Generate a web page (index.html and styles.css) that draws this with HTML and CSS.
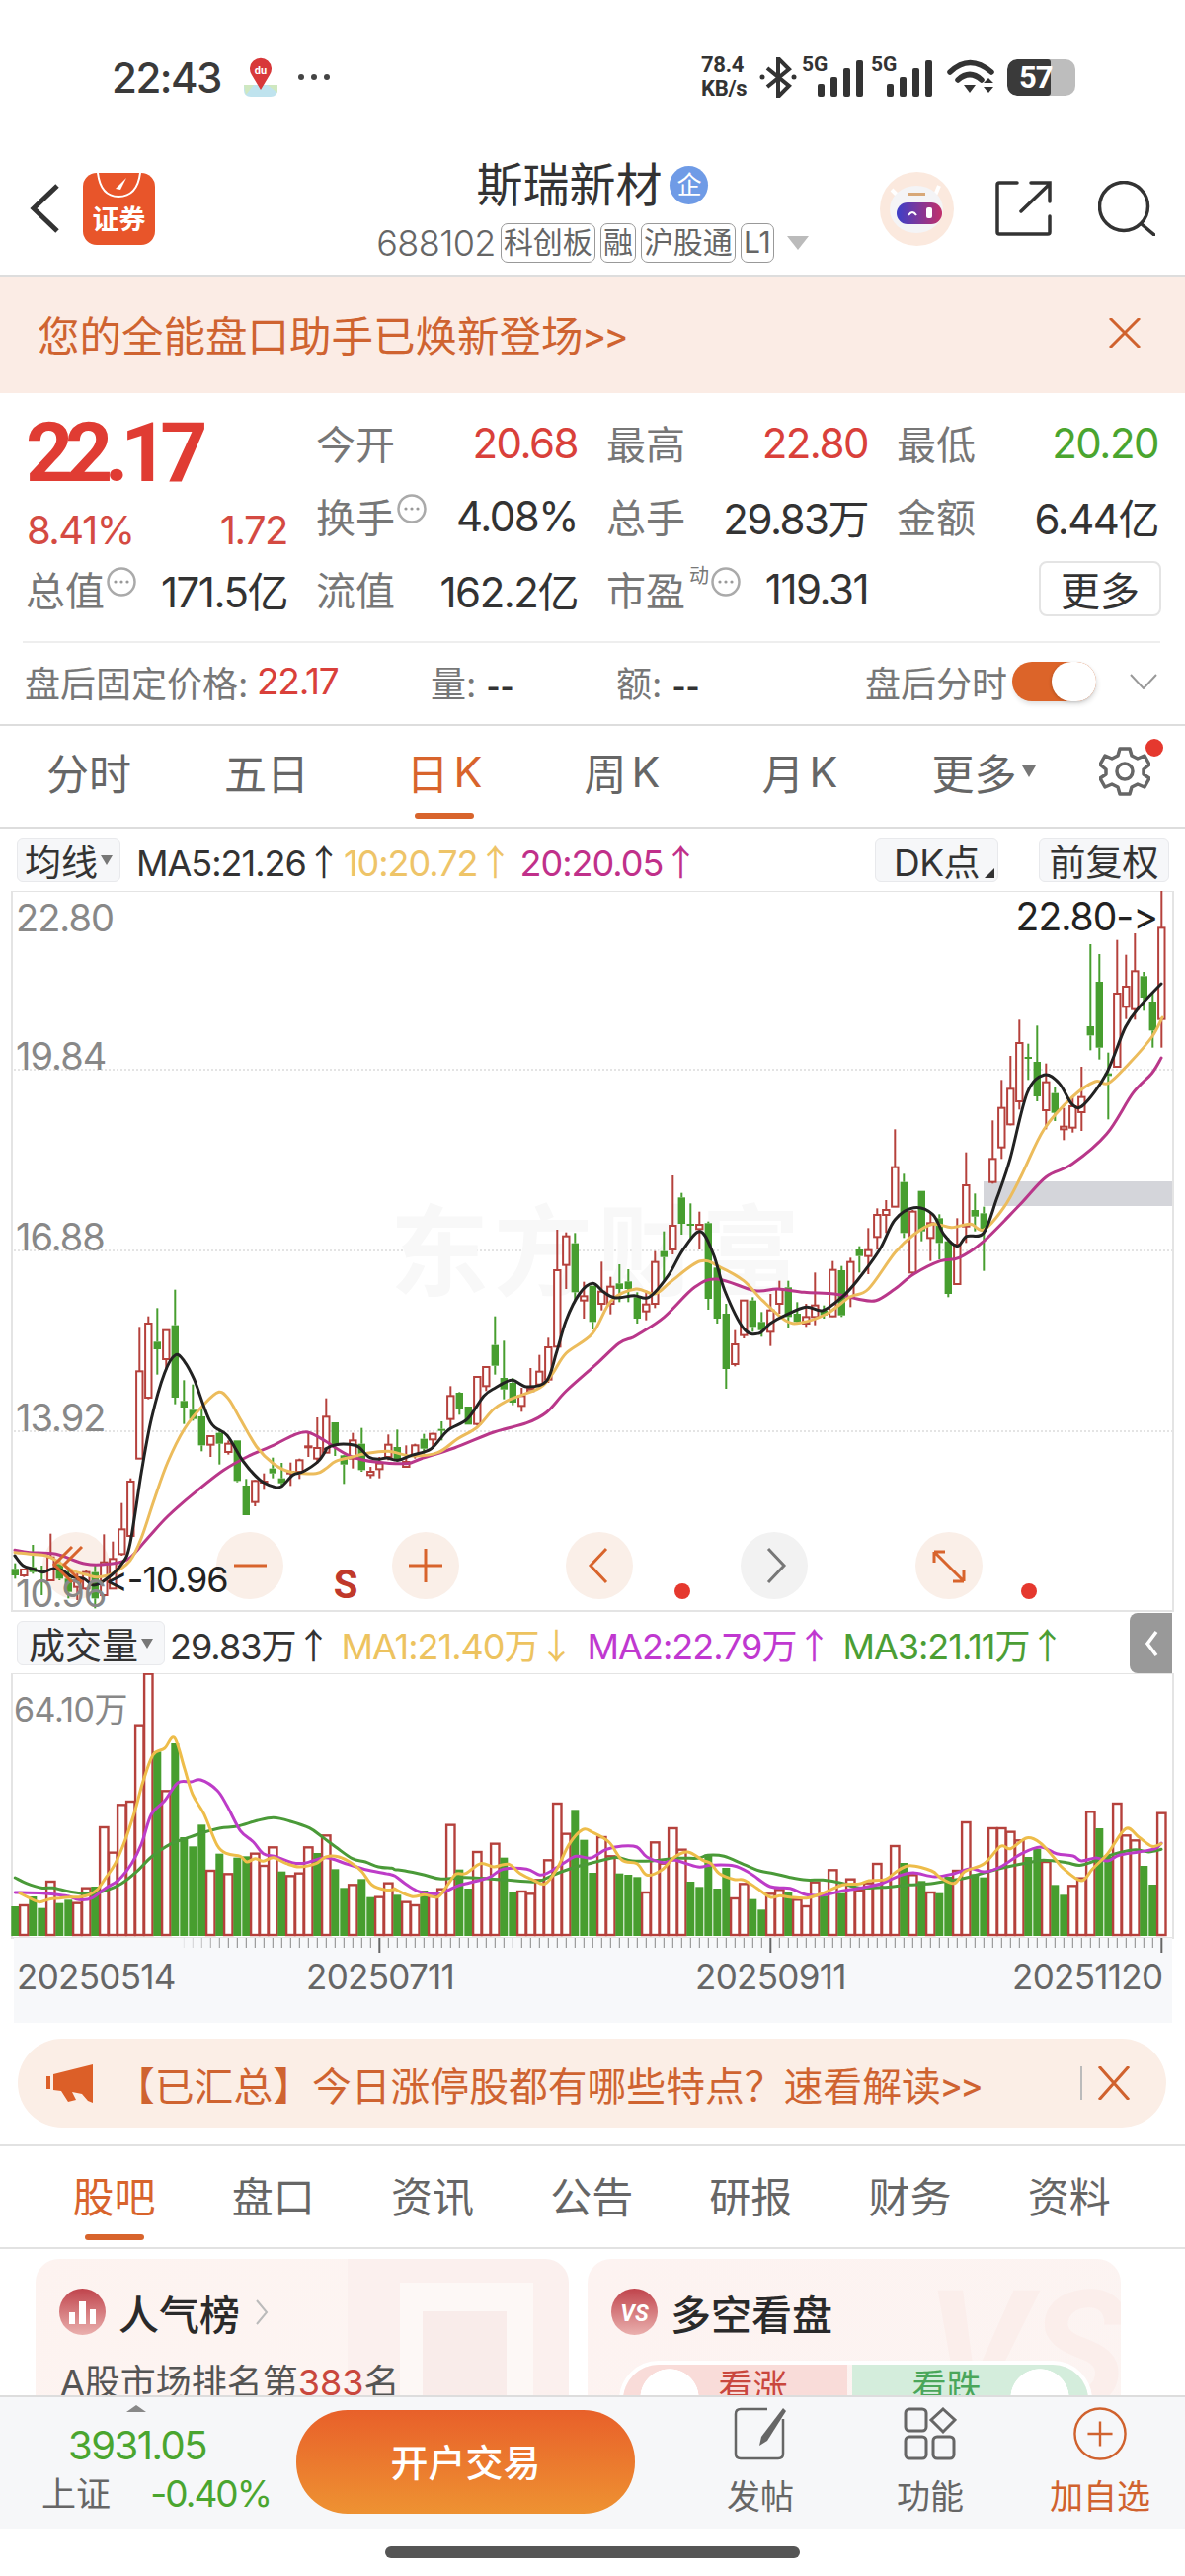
FILE: index.html
```html
<!DOCTYPE html>
<html lang="zh">
<head>
<meta charset="utf-8">
<title>斯瑞新材</title>
<link rel="stylesheet" href="styles.css">
</head>
<body>
<div class="page">
  <div class="content">
    <div class="status">
      <span class="clock">22:43</span>
      <svg class="map-ico" viewBox="0 0 38 40"><rect width="38" height="40" rx="8" fill="#fff"/><path d="M2 28 H36 V33 Q36 40 29 40 H9 Q2 40 2 33 Z" fill="#bfe3ee"/><path d="M2 28 L12 28 L4 38 Z M26 28 H36 V36 Z" fill="#cfe8c0"/><path d="M19 33 L10 18 A11 11 0 1 1 28 18 Z" fill="#d8383a"/><text class="du" x="19" y="17" text-anchor="middle">du</text></svg>
      <svg class="dots-ico" viewBox="0 0 32 8"><circle cx="3" cy="4" r="3"/><circle cx="16" cy="4" r="3"/><circle cx="29" cy="4" r="3"/></svg>
      <div class="sys">
        <div class="net"><b>78.4</b><b>KB/s</b></div>
        <svg class="bt" viewBox="0 0 38 41"><path d="M8 11 L30 29 L19 40 V1 L30 12 L8 30" fill="none" stroke="#333" stroke-width="4"/><circle cx="3" cy="20" r="2.5" fill="#333"/><circle cx="35" cy="20" r="2.5" fill="#333"/></svg>
        <svg class="sig" viewBox="0 -6 63 46"><text class="g5" x="0" y="14">5G</text><rect x="16" y="27" width="7" height="13" rx="2"/><rect x="29" y="20" width="7" height="20" rx="2"/><rect x="42" y="11" width="7" height="29" rx="2"/><rect x="55" y="3" width="7" height="37" rx="2"/></svg>
        <svg class="sig" viewBox="0 -6 63 46"><text class="g5" x="0" y="14">5G</text><rect x="16" y="27" width="7" height="13" rx="2"/><rect x="29" y="20" width="7" height="20" rx="2"/><rect x="42" y="11" width="7" height="29" rx="2"/><rect x="55" y="3" width="7" height="37" rx="2"/></svg>
        <svg class="wifi" viewBox="0 0 49 36"><path d="M3 13 Q23 -6 45 13" fill="none" stroke="#333" stroke-width="5.5" stroke-linecap="round"/><path d="M11 21 Q23 10 35 21" fill="none" stroke="#333" stroke-width="5.5" stroke-linecap="round"/><path d="M17 26 H29 L23 34 Z M37 24 L42 19 L47 24 Z M37 28 H47 L42 34 Z" fill="#333"/></svg>
        <div class="batt"><div class="batt-fill">57</div></div>
      </div>
    </div>

    <header class="head">
      <div class="head-l">
        <svg class="back" viewBox="0 0 31 52"><path d="M28 3 L4 26 L28 49" fill="none" stroke="#333" stroke-width="5"/></svg>
        <div class="logo"><svg class="logo-arc" viewBox="0 0 73 30"><path d="M15 0 Q18 24 36 24 Q55 24 58 0" fill="none" stroke="#fff" stroke-width="2"/><path d="M33 16 L44 5 L38 17 Z" fill="#fff"/></svg><span>证券</span></div>
      </div>
      <div class="head-c">
        <div class="title"><span>斯瑞新材</span><i class="qi">企</i></div>
        <div class="sub"><span class="code">688102</span><span class="tag">科创板</span><span class="tag">融</span><span class="tag">沪股通</span><span class="tag">L1</span><i class="tri"></i></div>
      </div>
      <div class="head-r">
        <svg class="robot" viewBox="0 0 75 75"><defs><linearGradient id="rb" x1="0" x2="1"><stop offset="0" stop-color="#3c3fc8"/><stop offset="1" stop-color="#c2306a"/></linearGradient></defs><circle cx="37.5" cy="37.5" r="37.5" fill="#fbe9de"/><path d="M12 18 L20 26 M60 14 L55 26" stroke="#fff" stroke-width="4"/><ellipse cx="37" cy="38" rx="27" ry="24" fill="#f4f4f6"/><rect x="29" y="21" width="17" height="3" fill="#d8a878"/><rect x="17" y="31" width="46" height="22" rx="11" fill="url(#rb)"/><path d="M29 44 Q33 38 37 44" fill="none" stroke="#fff" stroke-width="2"/><rect x="47" y="36" width="6" height="11" rx="2" fill="#fff"/></svg>
        <svg class="ext" viewBox="0 0 57 56"><path d="M22 2 H4 Q2 2 2 4 V52 Q2 54 4 54 H53 Q55 54 55 52 V36 M26 31 L55 3 M36 2 H55 V21" fill="none" stroke="#333" stroke-width="3.5" stroke-linecap="round"/></svg>
        <svg class="search" viewBox="0 0 58 56"><circle cx="26" cy="26" r="24.5" fill="none" stroke="#333" stroke-width="3.5"/><path d="M44 44 L57 55" stroke="#333" stroke-width="3.5" stroke-linecap="round"/></svg>
      </div>
    </header>

    <div class="notice">
      <span>您的全能盘口助手已焕新登场&gt;&gt;</span>
      <svg class="x-ico" viewBox="0 0 32 30"><path d="M1 0 L31 30 M31 0 L1 30" stroke="#d0622e" stroke-width="3"/></svg>
    </div>

    <section class="quote">
      <div class="price">
        <div class="big">22.17</div>
        <div class="chg"><span>8.41%</span><span>1.72</span></div>
      </div>
      <div class="cell"><span class="lab">今开</span><span class="red">20.68</span></div>
      <div class="cell"><span class="lab">最高</span><span class="red">22.80</span></div>
      <div class="cell"><span class="lab">最低</span><span class="grn">20.20</span></div>
      <div class="cell"><span class="lab">换手<svg class="hint" viewBox="0 0 30 30"><use href="#hint"/></svg></span><span class="dark">4.08%</span></div>
      <div class="cell"><span class="lab">总手</span><span class="dark">29.83万</span></div>
      <div class="cell"><span class="lab">金额</span><span class="dark">6.44亿</span></div>
      <div class="cell"><span class="lab">总值<svg class="hint" viewBox="0 0 30 30"><use href="#hint"/></svg></span><span class="dark">171.5亿</span></div>
      <div class="cell"><span class="lab">流值</span><span class="dark">162.2亿</span></div>
      <div class="cell"><span class="lab">市盈<sup class="dyn">动</sup><svg class="hint" viewBox="0 0 30 30"><use href="#hint"/></svg></span><span class="dark">119.31</span></div>
      <div class="cell more-cell"><button class="more">更多</button></div>
    </section>
    <svg class="defs"><defs><g id="hint"><circle cx="15" cy="15" r="13.5" fill="none" stroke="#aaa" stroke-width="2.5"/><circle cx="9" cy="15" r="1.6" fill="#999"/><circle cx="15" cy="15" r="1.6" fill="#999"/><circle cx="21" cy="15" r="1.6" fill="#999"/></g></defs></svg>

    <div class="after">
      <span class="al">盘后固定价格:</span>
      <span class="red al-v">22.17</span>
      <span class="al">量: <b>--</b></span>
      <span class="al">额: <b>--</b></span>
      <span class="al">盘后分时</span>
      <span class="toggle"><i></i></span>
      <svg class="chev" viewBox="0 0 28 16"><path d="M1 1 L14 15 L27 1" fill="none" stroke="#999" stroke-width="2"/></svg>
    </div>

    <nav class="ktabs">
      <span class="ktab">分时</span>
      <span class="ktab">五日</span>
      <span class="ktab on">日<span class="k">K</span></span>
      <span class="ktab">周<span class="k">K</span></span>
      <span class="ktab">月<span class="k">K</span></span>
      <span class="ktab ktab-more">更多<i class="caret"></i></span>
      <span class="gear-w">
        <svg class="gear" viewBox="0 0 52 52"><path d="M21 3 H31 L33 10 L39 13 L46 10 L51 19 L45 24 V29 L51 33 L46 42 L39 39 L33 42 L31 49 H21 L19 42 L13 39 L6 42 L1 33 L7 29 V24 L1 19 L6 10 L13 13 L19 10 Z" fill="none" stroke="#666" stroke-width="3.5" stroke-linejoin="round"/><circle cx="26" cy="26" r="8" fill="none" stroke="#666" stroke-width="3.5"/></svg>
        <i class="gear-dot"></i>
      </span>
    </nav>

    <div class="marow">
      <span class="pick pick-ma">均线<i class="caret sm"></i></span>
      <span class="mav dark">MA5:21.26<span class="ar">↑</span></span>
      <span class="mav c-y">10:20.72<span class="ar">↑</span></span>
      <span class="mav c-m">20:20.05<span class="ar">↑</span></span>
      <span class="pick pick-dk">DK点<i class="corner"></i></span>
      <span class="pick pick-fq">前复权</span>
    </div>

    <svg class="pchart" viewBox="0 902 1200 741">
      <rect class="frame" x="12" y="902" width="1176" height="729"/>
      <path class="grid" d="M14 1083 H1187 M14 1266 H1187 M14 1449 H1187"/>
      <text class="wm" x="395" y="1304">东方财富</text>
      <rect class="band" x="996" y="1196" width="191" height="25"/>
      <circle class="fab" cx="77" cy="1585" r="34"/>
      <circle class="fab" cx="253" cy="1585" r="34"/>
      <circle class="fab" cx="431" cy="1585" r="34"/>
      <circle class="fab" cx="607" cy="1585" r="34"/>
      <circle class="fab gr" cx="784" cy="1585" r="34"/>
      <circle class="fab" cx="961" cy="1585" r="34"/>
      <g id="candles"></g>
      <g id="mas"></g>
      <text class="axis" x="16" y="943">22.80</text>
      <text class="axis" x="16" y="1083">19.84</text>
      <text class="axis" x="16" y="1266">16.88</text>
      <text class="axis" x="16" y="1449">13.92</text>
      <text class="axis" x="16" y="1627">10.96</text>
      <text class="mark" x="1172" y="942" text-anchor="end">22.80-&gt;</text>
      <text class="mark sm" x="106" y="1612">&lt;-10.96</text>
      <path class="fi" d="M83 1566 L65 1584 L83 1602 M73 1566 L55 1584 L73 1602"/>
      <path class="fi" d="M237 1585 H270"/>
      <path class="fi" d="M414 1585 H448 M431 1568 V1602"/>
      <path class="fi" d="M614 1568 L598 1585 L614 1602"/>
      <path class="fi gr" d="M778 1568 L794 1585 L778 1602"/>
      <path class="fi" d="M946 1571 L976 1601 M946 1571 H957 M946 1571 V1582 M976 1601 H965 M976 1601 V1590"/>
      <text class="s-mark" x="350" y="1618" text-anchor="middle">S</text>
      <circle class="rdot" cx="691" cy="1611" r="8"/>
      <circle class="rdot" cx="1042" cy="1611" r="8"/>
    </svg>

    <div class="volrow">
      <span class="pick pick-vol">成交量<i class="caret sm"></i></span>
      <span class="mav dark">29.83万<span class="ar">↑</span></span>
      <span class="mav v-y">MA1:21.40万<span class="ar">↓</span></span>
      <span class="mav v-m">MA2:22.79万<span class="ar">↑</span></span>
      <span class="mav v-g">MA3:21.11万<span class="ar">↑</span></span>
      <span class="handle"><svg viewBox="0 0 14 28"><path d="M12 2 L3 14 L12 26" fill="none" stroke="#fff" stroke-width="3.5"/></svg></span>
    </div>

    <svg class="vchart" viewBox="0 1694 1200 354">
      <rect class="vframe" x="12" y="1694" width="1176" height="268"/>
      <rect class="strip" x="14" y="1962" width="1173" height="86"/>
      <g id="ticks"></g>
      <g id="bars"></g>
      <g id="vmas"></g>
      <text class="axis vol-axis" x="14" y="1743">64.10万</text>
      <text class="date" x="17" y="2014">20250514</text>
      <text class="date" x="310" y="2014">20250711</text>
      <text class="date" x="704" y="2014">20250911</text>
      <text class="date" x="1025" y="2014">20251120</text>
    </svg>

    <div class="promo">
      <svg class="horn" viewBox="0 0 47 39"><path d="M47 0 V39 L42 37 L36 30 L26 28 L30 36 L22 38 L15 27 L7 26 V10 Z" fill="#dc5f28"/><rect x="0" y="12" width="4" height="13" fill="#dc5f28"/></svg>
      <span class="promo-t">【已汇总】今日涨停股都有哪些特点？速看解读&gt;&gt;</span>
      <i class="promo-sep"></i>
      <svg class="x-ico2" viewBox="0 0 32 34"><path d="M1 0 L31 34 M31 0 L1 34" stroke="#d0622e" stroke-width="3"/></svg>
    </div>

    <nav class="btabs">
      <span class="btab on">股吧</span>
      <span class="btab">盘口</span>
      <span class="btab">资讯</span>
      <span class="btab">公告</span>
      <span class="btab">研报</span>
      <span class="btab">财务</span>
      <span class="btab">资料</span>
    </nav>

    <div class="cards">
      <article class="card card-a">
        <div class="card-h">
          <svg class="c-ico" viewBox="0 0 47 47"><defs><linearGradient id="ci" x1="0" x2="0" y1="0" y2="1"><stop offset="0" stop-color="#c0444c"/><stop offset="1" stop-color="#eab0ae"/></linearGradient></defs><circle cx="23.5" cy="23.5" r="23.5" fill="url(#ci)"/><path d="M10 36 V24 H16 V36 Z M20 36 V13 H27 V36 Z M31 36 V21 H37 V36 Z" fill="#fff"/></svg>
          <strong>人气榜</strong>
          <svg class="c-chev" viewBox="0 0 14 28"><path d="M2 2 L12 14 L2 26" fill="none" stroke="#bbb" stroke-width="2"/></svg>
        </div>
        <p class="rank">A股市场排名第<em>383</em>名</p>
      </article>
      <article class="card card-b">
        <span class="vs-bg">VS</span>
        <div class="card-h">
          <svg class="c-ico" viewBox="0 0 47 47"><circle cx="23.5" cy="23.5" r="23.5" fill="url(#ci)"/><text class="vs" x="23.5" y="33" text-anchor="middle">VS</text></svg>
          <strong>多空看盘</strong>
        </div>
        <div class="vote"><span class="up">看涨</span><span class="down">看跌</span></div>
      </article>
    </div>
  </div>

  <footer class="bar">
    <div class="idx">
      <i class="idx-up"></i>
      <div class="idx-v">3931.05</div>
      <div class="idx-r"><span>上证</span><span class="idx-c">-0.40%</span></div>
    </div>
    <button class="open">开户交易</button>
    <div class="act">
      <svg class="a-ico" viewBox="0 0 54 54"><path d="M34 2 H7 Q2 2 2 7 V47 Q2 52 7 52 H45 Q50 52 50 47 V12" fill="none" stroke="#666" stroke-width="2.5"/><path d="M50 1 L53 4 L34 34 L26 39 L28 30 Z" fill="#666"/></svg>
      <span>发帖</span>
    </div>
    <div class="act">
      <svg class="a-ico" viewBox="0 0 54 54"><g fill="none" stroke="#666" stroke-width="3"><rect x="2" y="2" width="21" height="22" rx="4"/><rect x="2" y="30" width="21" height="22" rx="4"/><rect x="30" y="30" width="21" height="22" rx="4"/><path d="M40 2 L52 13 L40 25 L28 13 Z"/></g></svg>
      <span>功能</span>
    </div>
    <div class="act act-o">
      <svg class="a-ico" viewBox="0 0 56 56"><circle cx="28" cy="28" r="26.5" fill="none" stroke="#d0622e" stroke-width="2.5"/><path d="M15 28 H41 M28 15 V41" stroke="#d0622e" stroke-width="2.5"/></svg>
      <span>加自选</span>
    </div>
  </footer>
  <div class="homebar"><i></i></div>
</div>
<script src="chart.js"></script>
</body>
</html>
```
FILE: styles.css
```css
* { box-sizing: border-box; }
html, body { margin: 0; padding: 0; background: #fff; }
body { font-family: Inter, "Noto Sans CJK SC", sans-serif; color: #333; }
i { font-style: normal; display: block; }
svg { display: block; flex: none; }
.page { width: 1200px; height: 2608px; overflow: hidden; display: flex; flex-direction: column; }
.content { flex: 1; min-height: 0; overflow: hidden; }

/* status bar */
.status { height: 130px; padding: 26px 111px 0 113px; display: flex; align-items: center; }
.clock { font-size: 42px; font-weight: 500; color: #3a3a3a; width: 112px; letter-spacing: -1.5px; white-space: nowrap; }
.map-ico { width: 38px; height: 40px; margin-left: 20px; }
.du { font: 700 11px Roboto, sans-serif; fill: #fff; }
.dots-ico { width: 32px; height: 8px; margin-left: 19px; fill: #444; }
.sys { margin-left: auto; display: flex; align-items: center; }
.net { width: 47px; display: flex; flex-direction: column; gap: 6px; margin-right: 12px; }
.net b { font: 700 22px/18px Roboto, sans-serif; color: #333; white-space: nowrap; letter-spacing: -.3px; }
.bt { width: 38px; height: 41px; margin-right: 5px; }
.sig { width: 63px; height: 46px; margin: -6px 7px 0 0; fill: #333; }
.g5 { font: 700 21px Roboto, sans-serif; fill: #333; }
.wifi { width: 49px; height: 36px; margin: 0 12px 0 7px; }
.batt { width: 69px; height: 37px; border-radius: 10px; background: #bdbdbd; overflow: hidden; }
.batt-fill { width: 44px; height: 37px; background: #3a3a3a; color: #fff; font: 700 31px/37px Roboto, sans-serif; padding-left: 12px; border-radius: 10px 3px 3px 10px; white-space: nowrap; letter-spacing: -1px; }

/* header */
.head { height: 150px; border-bottom: 2px solid #ddd; display: grid; grid-template-columns: 1fr auto 1fr; }
.head-l { display: flex; align-items: center; padding: 14px 0 0 30px; }
.back { width: 31px; height: 52px; }
.logo { width: 73px; height: 73px; margin-left: 23px; background: #e8552a; border-radius: 14px; color: #fff; display: flex; flex-direction: column; align-items: center; overflow: hidden; }
.logo-arc { width: 73px; height: 30px; }
.logo span { font-size: 27px; font-weight: 700; line-height: 36px; }
.head-c { padding-top: 32px; display: flex; flex-direction: column; align-items: center; }
.title { display: flex; align-items: center; height: 50px; font-size: 47px; line-height: 50px; color: #333; }
.qi { width: 39px; height: 39px; margin-left: 8px; border-radius: 50%; background: #6f9be6; color: #fff; font-size: 25px; line-height: 39px; text-align: center; }
.sub { display: flex; align-items: center; gap: 5px; margin-top: 14px; height: 40px; }
.code { font-size: 36px; color: #666; font-weight: 300; letter-spacing: -.6px; }
.tag { height: 40px; border: 1.5px solid #999; border-radius: 7px; font-size: 30px; line-height: 36px; padding: 0 2px; color: #666; white-space: nowrap; }
.tri { width: 0; height: 0; border-left: 11px solid transparent; border-right: 11px solid transparent; border-top: 14px solid #bbb; margin-left: 8px; }
.head-r { display: flex; align-items: center; justify-content: flex-end; padding: 14px 30px 0 0; }
.robot { width: 75px; height: 75px; }
.ext { width: 57px; height: 56px; margin-left: 42px; }
.search { width: 58px; height: 56px; margin-left: 47px; }

/* notice */
.notice { height: 118px; background: #fbece5; color: #cf6330; font: 42.5px Roboto, "Noto Sans CJK SC", sans-serif; display: flex; align-items: center; justify-content: space-between; padding: 0 45px 4px 38px; }
.x-ico { width: 32px; height: 30px; }

/* quote */
.quote { display: grid; grid-template-columns: repeat(4, 265px); grid-auto-rows: 74px; column-gap: 29px; padding: 13px 0 16px 26px; font-size: 40px; }
.price { grid-row: 1 / span 2; padding-top: 17px; }
.big { font: 700 84px/62px Roboto, sans-serif; color: #e03c33; letter-spacing: -8.2px; }
.chg { display: flex; justify-content: space-between; margin-top: 30px; font-size: 40px; line-height: 34px; color: #d44a42; letter-spacing: -1.5px; padding-left: 1px; }
.cell { display: flex; align-items: center; justify-content: space-between; white-space: nowrap; }
.lab { display: flex; align-items: center; color: #777; }
.red { color: #d9403a; }
.grn { color: #4aa52f; }
.dark { color: #333; }
.quote .red, .quote .grn, .quote .dark { letter-spacing: -1.5px; font-size: 42px; }
.hint { width: 30px; height: 30px; margin: 0 0 14px 2px; }
.dyn { font-size: 20px; line-height: 20px; align-self: flex-start; margin: 6px 0 0 4px; }
.more-cell { justify-content: flex-end; }
.more { width: 124px; height: 56px; margin-right: -3px; background: #fff; border: 2px solid #e4e4e4; border-radius: 8px; font: 40px "Noto Sans CJK SC", sans-serif; line-height: 50px; color: #333; padding: 0; }
.defs { width: 0; height: 0; position: absolute; }

/* after hours */
.after { height: 86px; border-bottom: 2px solid #ddd; padding: 0 0 3px 25px; display: grid; grid-template-columns: 235px 176px 188px 252px 149px 119px 40px; align-items: center; position: relative; font-size: 36px; color: #777; }
.after::before { content: ""; position: absolute; left: 23px; right: 25px; top: 0; border-top: 2px solid #eee; }
.al { white-space: nowrap; }
.al b { color: #333; font-weight: 700; font-size: 30px; }
.after .al-v { letter-spacing: -1.2px; font-size: 37px; }
.toggle { width: 85px; height: 40px; border-radius: 20px; background: #dc6429; display: block; padding-left: 40px; box-shadow: 1px 3px 5px rgba(0,0,0,.12); }
.toggle i { width: 45px; height: 40px; border-radius: 20px; background: #fff; box-shadow: -1px 1px 3px rgba(0,0,0,.15); }
.chev { width: 28px; height: 16px; }

/* K tabs */
.ktabs { height: 104px; border-bottom: 2px solid #ddd; display: flex; align-items: center; padding-bottom: 10px; font-size: 43px; color: #666; }
.ktab { width: 180px; text-align: center; position: relative; display: flex; justify-content: center; align-items: center; }
.k { margin-left: 5px; }
.ktab.on { color: #d8642c; }
.ktab.on::after { content: ""; position: absolute; left: 60px; width: 60px; height: 6px; top: 73px; border-radius: 3px; background: #d8642c; }
.ktab-more { padding-left: 12px; }
.caret { width: 0; height: 0; border-left: 7px solid transparent; border-right: 7px solid transparent; border-top: 12px solid #777; margin-left: 5px; }
.caret.sm { border-left-width: 6px; border-right-width: 6px; border-top-width: 10px; margin-left: 3px; }
.gear-w { margin-left: 33px; position: relative; width: 52px; height: 52px; }
.gear { width: 52px; height: 52px; }
.gear-dot { position: absolute; top: -7px; right: -13px; width: 18px; height: 18px; border-radius: 50%; background: #e5382e; }

/* MA rows */
.marow { height: 63px; display: flex; align-items: center; padding-left: 17px; font-size: 36px; }
.pick { height: 45px; background: #f6f7f9; border: 1.5px solid #e8e9ec; border-radius: 6px; display: flex; align-items: center; justify-content: center; color: #333; font-size: 37px; white-space: nowrap; position: relative; }
.pick-ma { width: 105px; margin-right: 16px; }
.pick-dk { width: 125px; margin-left: auto; letter-spacing: -.5px; }
.pick-fq { width: 132px; margin: 0 16px 0 41px; }
.corner { position: absolute; right: 3px; bottom: 3px; width: 0; height: 0; border-left: 10px solid transparent; border-bottom: 10px solid #333; }
.mav { white-space: nowrap; letter-spacing: -1px; }
.ar { font-family: "Noto Sans CJK SC", sans-serif; }
.c-y { color: #eec468; margin-left: 3px; }
.c-m { color: #c0308a; margin-left: 8px; }
.volrow { height: 61px; display: flex; align-items: center; padding-left: 17px; font-size: 36px; position: relative; }
.pick-vol { width: 150px; margin-right: 5px; }
.v-y { color: #edc35f; margin-left: 11px; }
.v-m { color: #c038d0; margin-left: 14px; }
.v-g { color: #4b9e34; margin-left: 12px; }
.handle { position: absolute; right: 13px; top: 0; width: 43px; height: 61px; border-radius: 8px 0 0 8px; background: #999; display: flex; align-items: center; justify-content: center; }
.handle svg { width: 14px; height: 28px; }

/* charts */
.pchart { width: 1200px; height: 741px; margin-bottom: -10px; }
.vchart { width: 1200px; height: 354px; }
.frame, .vframe { fill: #fff; stroke: #e4e4e4; stroke-width: 2; }
.grid { stroke: #c9c9c9; stroke-width: 1; stroke-dasharray: 2 2; fill: none; }
.wm { font: 700 100px "Noto Sans CJK SC", sans-serif; fill: #f8f8f8; letter-spacing: 5px; }
.band { fill: #d4d5da; }
.axis { font: 38px Inter, "Noto Sans CJK SC", sans-serif; fill: #888; letter-spacing: -1px; }
.vol-axis { font-size: 34px; letter-spacing: -.5px; }
.mark { font: 39px Inter, sans-serif; fill: #222; letter-spacing: -1px; }
.mark.sm { font-size: 36px; letter-spacing: -1px; }
.date { font: 35px Inter, sans-serif; fill: #666; letter-spacing: -.7px; }
.strip { fill: #f7f8fa; }
.up-body { fill: #fff; stroke: #b5413c; stroke-width: 2; }
.up-wick { stroke: #b5413c; stroke-width: 2; }
.dn-body { fill: #479e2f; }
.dn-wick { stroke: #479e2f; stroke-width: 2; }
.vup { fill: #fff; stroke: #b5413c; stroke-width: 2.4; }
.vdn { fill: #479e2f; }
.tick { stroke: #888; stroke-width: 1; }
.tick.tall { stroke: #666; stroke-width: 2; }
.line { fill: none; stroke-width: 3; stroke-linejoin: round; stroke-linecap: round; }
.l-k { stroke: #222; }
.l-y { stroke: #ecbc5c; }
.l-m { stroke: #b9378a; }
.l-vy { stroke: #eebd4a; }
.l-vm { stroke: #bd3cc8; }
.l-vg { stroke: #4a9a38; }
.fab { fill: #faefe8; }
.fab.gr { fill: #f2f2f2; }
.fi { fill: none; stroke: #d8642c; stroke-width: 3; }
.fi.gr { stroke: #777; }
.s-mark { font: 700 40px Roboto, sans-serif; fill: #c0392b; }
.rdot { fill: #e5382e; }

/* promo */
.promo { margin: 16px 19px 0 18px; height: 90px; border-radius: 45px; background: #fbeee6; display: flex; align-items: center; padding-left: 29px; }
.horn { width: 47px; height: 39px; }
.promo-t { margin-left: 23px; font: 39.8px Roboto, "Noto Sans CJK SC", sans-serif; color: #cf6330; white-space: nowrap; width: 943px; }
.promo-sep { width: 2px; height: 34px; background: #bbb; margin-left: 34px; }
.x-ico2 { width: 32px; height: 34px; margin-left: 16px; }

/* bottom tabs */
.btabs { margin-top: 17px; height: 106px; border-top: 2px solid #e2e2e2; border-bottom: 2px solid #e2e2e2; padding: 0 0 6px 35px; display: flex; align-items: center; font-size: 42px; color: #666; }
.btab { width: 161.2px; text-align: center; position: relative; }
.btab.on { color: #d8642c; }
.btab.on::after { content: ""; position: absolute; left: 51px; width: 60px; height: 6px; top: 71px; border-radius: 3px; background: #d8642c; }

/* cards */
.cards { margin-top: 10px; padding-left: 36px; display: flex; gap: 19px; }
.card { width: 540px; height: 300px; border-radius: 24px; padding: 30px 0 0 24px; position: relative; overflow: hidden; }
.card-a { background: linear-gradient(#f9ecea, #f9ecea) 392px 53px / 85px 100% no-repeat, linear-gradient(#fdf8f6, #fdf8f6) 369px 24px / 135px 100% no-repeat, linear-gradient(#fbf0ee, #fbf0ee) 316px 0 / 224px 100% no-repeat, linear-gradient(120deg, #fdf3f0, #fdf6f4); }
.card-b { background: linear-gradient(120deg, #fdf3f1, #fcf4f2); }
.card-h { display: flex; align-items: center; position: relative; height: 47px; }
.c-ico { width: 47px; height: 47px; }
.card-h strong { margin-left: 13px; font-size: 41px; font-weight: 500; color: #2a2a2a; white-space: nowrap; }
.c-chev { width: 14px; height: 28px; margin-left: 15px; }
.vs { font: italic 700 23px Roboto, sans-serif; fill: #fff; }
.vs-bg { position: absolute; right: -6px; top: -4px; font: italic 700 165px Roboto, sans-serif; color: #fbeeeb; }
.rank { margin: 30px 0 0 1px; font-size: 36px; color: #555; white-space: nowrap; position: relative; line-height: 36px; }
.rank em { font-style: normal; color: #c9473d; }
.vote { margin: 26px 0 0 8px; width: 479px; height: 90px; border: 4px solid #fff; border-radius: 40px; display: flex; overflow: hidden; position: relative; font-size: 35px; }
.vote span { flex: 1; text-align: center; line-height: 44px; height: 90px; }
.up { background: radial-gradient(circle 30px at 47px 34px, #fff 98%, #f9dcd9 100%); color: #c9473d; padding-left: 36px; margin-right: 5px; }
.down { background: radial-gradient(circle 30px at 190px 34px, #fff 98%, #d4eddc 100%); color: #4aa65a; padding-right: 48px; }

/* bottom bar */
.bar { height: 135px; flex: none; background: #f6f7f9; border-top: 2px solid #ddd; display: flex; align-items: flex-start; position: relative; z-index: 1; }
.idx { width: 300px; padding-left: 42px; }
.idx-up { width: 0; height: 0; margin: 8px 0 0 86px; border-left: 10px solid transparent; border-right: 10px solid transparent; border-bottom: 7px solid #888; }
.idx-v { margin: 10px 0 0 27px; font-size: 40px; line-height: 48px; color: #4aa52f; letter-spacing: -1.5px; }
.idx-r { display: flex; justify-content: space-between; width: 232px; margin-top: 0; font-size: 35px; line-height: 50px; color: #666; white-space: nowrap; }
.idx-c { color: #4aa52f; font-size: 37px; letter-spacing: -2px; }
.open { width: 343px; height: 105px; margin-top: 13px; border: 0; border-radius: 52px; background: linear-gradient(180deg, #e8602a, #ee9232); color: #fff; font: 500 38px "Noto Sans CJK SC", sans-serif; padding: 0 0 4px; }
.act { width: 172px; display: flex; flex-direction: column; align-items: center; padding-top: 10px; font-size: 34px; color: #666; white-space: nowrap; line-height: 44px; gap: 15px; }
.idx + .open + .act { margin-left: 41px; }
.act-o { color: #d0622e; }
.a-ico { width: 54px; height: 54px; }
.homebar { height: 48px; flex: none; display: flex; justify-content: center; padding-top: 18px; background: #fff; position: relative; z-index: 1; }
.homebar i { width: 420px; height: 12px; border-radius: 6px; background: #555; }
```
FILE: chart.js
```js
(function () {
  var NS = 'http://www.w3.org/2000/svg';
  function el(parent, tag, cls, attrs) {
    var n = document.createElementNS(NS, tag);
    n.setAttribute('class', cls);
    for (var k in attrs) n.setAttribute(k, attrs[k]);
    parent.appendChild(n);
    return n;
  }
  function X(i) { return 15.3 + 9 * i; }
  function scale(ox, oy, sx, sy, a) {
    var p = [];
    for (var i = 0; i < a.length; i += 2) p.push([ox + a[i] / sx, oy + a[i + 1] / sy]);
    return p;
  }
  function curve(p) {
    var d = 'M' + p[0][0].toFixed(1) + ' ' + p[0][1].toFixed(1);
    for (var i = 0; i < p.length - 1; i++) {
      var a = p[i - 1] || p[i], b = p[i], c = p[i + 1], e = p[i + 2] || c;
      d += 'C' + (b[0] + (c[0] - a[0]) / 6).toFixed(1) + ' ' + (b[1] + (c[1] - a[1]) / 6).toFixed(1) + ' ' +
        (c[0] - (e[0] - b[0]) / 6).toFixed(1) + ' ' + (c[1] - (e[1] - b[1]) / 6).toFixed(1) + ' ' +
        c[0].toFixed(1) + ' ' + c[1].toFixed(1);
    }
    return d;
  }

  /* candles: [up, high, top, bottom, low], read from the three sections of the chart */
  var A = [[0,878,895,915,925],[1,895,897,915,920],[0,822,890,905,910],[0,885,900,905,975],[1,788,860,930,930],[0,865,880,925,930],[0,890,925,965,985],[1,905,930,950,990],[1,900,905,955,960],[0,880,905,985,1015],[1,790,875,975,980],[1,812,865,955,955],[1,695,775,850,855],[1,620,630,795,800],[1,160,295,560,560],[1,128,150,375,380],[0,103,205,228,305],[1,168,170,258,290],[0,47,155,375,395],[0,322,385,405,455],[0,335,412,440,445],[0,410,432,520,538],[1,490,492,518,555],[0,470,482,515,578],[1,505,515,540,548],[0,505,505,628,632],[0,622,642,732,732],[1,625,628,692,705],[1,605,630,632,655],[0,557,590,605,620],[0,573,620,635,645],[1,572,600,605,643],[1,560,565,600,622],[1,480,523,525,555]];
  var B = [[1,705,798,830,845],[1,647,703,812,812],[0,720,720,790,822],[0,830,820,848,907],[1,752,775,830,860],[0,737,785,865,870],[1,855,870,880,890],[1,825,845,862,890],[1,757,788,825,835],[0,742,795,835,840],[1,790,840,855,855],[1,785,790,820,830],[0,755,770,800,815],[1,752,755,772,800],[0,717,740,745,775],[1,610,640,710,740],[0,628,630,678,697],[0,672,672,727,727],[1,580,582,725,730],[1,550,552,610,625],[0,398,485,548,575],[0,472,585,620,650],[0,585,600,660,668],[1,615,640,670,688],[1,555,618,625,630],[1,515,566,605,610],[1,463,492,590,600],[1,135,258,490,490],[1,143,155,242,315],[0,145,176,325,350],[1,293,337,350,405],[0,305,305,415,438],[1,232,323,360,380],[1,278,308,360,392],[0,240,298,315,355],[0,255,292,315,355]];
  var C = [[0,1225,1240,1305,1320],[1,1220,1262,1283,1310],[1,1100,1133,1260,1273],[0,1040,1100,1118,1190],[1,870,1023,1095,1110],[0,923,937,1017,1050],[0,955,1017,1020,1060],[1,980,1020,1033,1095],[0,1010,1015,1245,1278],[0,1145,1150,1305,1320],[0,1260,1290,1458,1518],[1,1340,1383,1443,1450],[1,1248,1250,1355,1365],[0,1240,1250,1330,1345],[0,1285,1315,1340,1360],[1,1230,1280,1345,1388],[1,1190,1215,1260,1290],[0,1190,1210,1300,1335],[0,1255,1290,1315,1320],[1,1260,1300,1320,1330],[1,1165,1265,1300,1325],[0,1265,1280,1295,1305],[1,1130,1157,1298,1300],[0,1145,1158,1295,1300],[1,1120,1133,1240,1270],[0,1085,1095,1115,1165],[1,1030,1097,1115,1170],[1,970,990,1057,1095],[1,945,975,990,1045],[1,730,845,965,965],[0,865,890,1045,1060],[1,975,980,1165,1170],[0,917,917,1040,1070],[1,985,1015,1060,1130],[0,988,1000,1075,1125],[0,1060,1070,1230,1240],[1,1000,1080,1200,1200],[1,800,900,1025,1075],[0,925,975,995,1040],[0,965,985,1040,1160],[1,703,820,890,895],[1,580,665,785,820],[1,507,607,715,718],[1,397,468,645,670],[0,470,510,515,580],[0,415,525,630,645],[1,530,587,672,730],[0,600,620,680,705],[1,665,722,730,763],[1,630,660,725,740],[1,540,632,678,735],[0,168,417,445,490],[0,198,282,482,518],[0,497,560,568,700],[1,155,318,540,540],[1,200,297,358,395],[1,135,250,365,397],[0,252,265,330,370],[0,315,342,430,482],[1,0,118,395,482]];

  var g = document.getElementById('candles');
  function drawCandles(list, first, oy) {
    list.forEach(function (c, k) {
      var x = X(first + k), h = oy + c[1] / 3, t = oy + c[2] / 3, b = oy + c[3] / 3, l = oy + c[4] / 3;
      var w = c[0] ? 'up-wick' : 'dn-wick';
      el(g, 'line', w, { x1: x, x2: x, y1: h, y2: t });
      el(g, 'line', w, { x1: x, x2: x, y1: b, y2: l });
      if (c[0]) el(g, 'rect', 'up-body', { x: x - 3.2, y: t, width: 6.4, height: Math.max(b - t, 1) });
      else el(g, 'rect', 'dn-body', { x: x - 3.7, y: t, width: 7.4, height: Math.max(b - t, 2) });
    });
  }
  drawCandles(A, 0, 1290);
  drawCandles(B, 34, 1200);
  drawCandles(C, 70, 900);

  function Z7(a) { return scale(10, 1290, 3, 3, a); }
  function Z8(a) { return scale(320, 1200, 3, 3, a); }
  function Z4(a) { return scale(600, 900, 2.613, 3, a); }
  var m = document.getElementById('mas');
  el(m, 'path', 'line l-m', { d: curve(Z7([15,838,60,845,140,850,230,880,300,880,360,865,420,800,480,735,560,665,650,595,730,550,800,520,860,490,905,480,960,508]).concat(Z8([60,798,110,825,180,840,275,845,320,830,420,798,540,750,640,722,700,690,760,625,850,545,920,480,960,463]), Z4([125,1350,190,1300,270,1210,330,1185,430,1220,490,1215,560,1225,640,1230,700,1245,750,1250,800,1215,850,1170,920,1130,970,1120,1035,1070,1130,960,1200,875,1270,835,1360,745,1430,620,1480,560,1505,513]))) });
  el(m, 'path', 'line l-y', { d: curve(Z7([15,845,60,850,110,855,150,875,190,900,240,915,265,920,310,910,365,870,400,800,440,680,480,570,530,470,590,395,635,358,665,380,700,440,750,525,800,575,850,600,930,605,960,590]).concat(Z8([60,838,110,825,150,815,220,808,290,822,370,812,430,770,490,735,540,680,590,650,680,615,720,570,760,510,840,450]), Z4([50,1250,115,1215,165,1230,210,1190,285,1130,340,1150,400,1190,450,1250,510,1310,550,1318,620,1290,680,1240,730,1215,800,1105,850,1050,900,1018,950,1028,1000,1018,1035,1035,1090,965,1135,870,1195,730,1270,632,1330,585,1365,590,1420,530,1480,450,1508,390]))) });
  el(m, 'path', 'line l-k', { d: curve(Z7([15,855,40,885,70,895,100,905,130,895,160,900,190,920,225,925,255,945,295,925,340,880,365,820,400,600,430,440,470,300,503,245,530,265,560,320,610,450,660,490,710,570,760,625,800,645,825,645,860,610,890,600,935,570,960,535]).concat(Z8([30,800,60,788,100,787,130,795,160,825,190,832,215,828,250,835,290,820,350,800,400,745,460,710,510,640,545,615,595,592,640,612,700,595,730,510,760,410,800,330,840,298]), Z4([30,1225,60,1242,110,1235,150,1240,200,1175,240,1095,285,1040,320,1110,350,1220,400,1335,440,1350,470,1320,510,1295,565,1270,610,1280,660,1240,700,1190,760,1095,800,1005,850,968,900,988,930,1050,965,1085,990,1055,1035,1045,1070,940,1105,820,1150,620,1195,565,1235,590,1270,655,1300,655,1360,560,1410,420,1450,355,1505,288]))) });

  /* volume bars: [up, top] */
  var V = [[0,720],[1,717],[0,690],[0,725],[1,645],[0,710],[0,700],[1,710],[1,665],[0,660],[1,480],[1,557],[1,412],[1,402],[1,170],[1,14],[0,250],[1,370],[0,225],[0,510],[0,538],[0,472],[1,612],[0,560],[1,622],[0,572],[0,568],[1,560],[1,597],[1,541],[0,614],[1,628],[1,620],[1,541],[0,558],[1,505],[0,607],[0,664],[1,655],[0,637],[0,692],[1,692],[1,650],[0,685],[1,707],[1,717],[0,672],[1,690],[1,668],[1,473],[0,608],[0,666],[1,555],[1,635],[1,530],[0,572],[0,678],[1,675],[1,682],[1,640],[1,580],[1,408],[1,500],[0,427],[0,518],[0,618],[1,510],[1,568],[0,620],[0,624],[0,631],[1,678],[1,526],[1,590],[1,483],[1,548],[0,645],[0,661],[0,563],[0,666],[0,603],[1,696],[1,652],[0,698],[0,730],[1,682],[1,670],[0,675],[1,700],[1,720],[1,647],[0,688],[1,610],[0,680],[1,638],[1,672],[1,650],[1,591],[1,640],[1,537],[0,588],[1,625],[0,643],[1,678],[0,680],[0,630],[1,612],[1,465],[0,622],[0,632],[1,483],[1,483],[1,494],[1,520],[0,570],[0,545],[1,585],[0,655],[0,685],[1,658],[1,635],[1,433],[0,483],[0,570],[1,408],[1,505],[1,520],[0,597],[0,654],[1,437]];
  var bars = document.getElementById('bars'), base = 1960;
  V.forEach(function (v, i) {
    var x = X(i), y = 1690 + v[1] / 3;
    if (v[0]) el(bars, 'rect', 'vup', { x: x - 4.2, y: y, width: 8.4, height: base - y - 1 });
    else el(bars, 'rect', 'vdn', { x: x - 4, y: y, width: 8, height: base - y });
  });

  var ticks = document.getElementById('ticks');
  for (var i = 19; i < 130; i++) {
    var tall = i === 41 || i === 85 || i === 129;
    var t = el(ticks, 'line', tall ? 'tick tall' : 'tick', { x1: X(i), x2: X(i), y1: 1962, y2: tall ? 1977 : 1972 });
    if (i < 24) t.setAttribute('opacity', (i - 18) / 6);
  }

  function V9(a) { return scale(10, 1690, 3, 3, a); }
  function V10(a) { return scale(400, 1690, 3, 3, a); }
  function V11(a) { return scale(800, 1690, 3, 3, a); }
  var vm = document.getElementById('vmas');
  el(vm, 'path', 'line l-vg', { d: curve(V9([16,633,50,650,95,664,130,664,180,675,240,682,290,672,340,650,390,610,430,570,490,530,540,512,590,495,640,482,690,477,750,460,800,451,850,461,910,482,950,510,990,540,1040,575,1080,585,1120,600,1160,604]).concat(V10([0,608,30,612,90,625,140,637,210,632,270,635,340,640,430,645,480,625,540,603,590,590,650,575,680,572,720,582,780,582,860,574,920,574,950,565,1000,568,1060,593,1110,613,1150,620]), V11([0,632,50,640,100,640,160,650,210,664,290,662,360,655,420,652,480,643,540,632,600,615,660,600,720,588,770,580,840,587,885,595,950,572,1000,557,1050,548,1090,555,1128,547]))) });
  el(vm, 'path', 'line l-vm', { d: curve(V9([16,678,100,680,140,684,180,690,210,700,250,695,290,665,330,640,370,590,400,530,430,440,470,400,510,345,550,342,580,336,630,368,660,415,700,490,740,525,770,560,810,570,860,588,900,588,960,572,1020,590,1080,608,1150,622]).concat(V10([0,628,30,650,65,672,100,680,140,680,190,658,220,650,260,640,290,630,330,607,400,607,440,625,470,615,510,590,550,568,595,573,640,548,690,537,735,540,765,570,815,587,850,580,920,600,960,595,1030,597,1080,620,1140,660]), V11([0,665,50,685,100,686,160,673,210,665,280,650,330,628,375,618,440,630,500,620,550,605,590,615,640,600,700,562,760,540,810,560,860,567,885,582,930,573,965,582,1000,565,1060,555,1110,545,1128,528]))) });
  el(vm, 'path', 'line l-vy', { d: curve(V9([30,680,60,695,90,707,120,698,150,695,180,692,210,692,240,685,265,670,290,635,320,590,350,520,380,430,405,340,435,260,470,240,500,208,530,300,555,380,590,440,630,535,660,560,700,568,720,585,745,575,770,583,800,572,840,590,880,600,930,590,960,570,1000,570,1040,590,1070,615,1100,655,1140,670,1170,668]).concat(V10([0,668,50,690,90,685,130,692,160,655,185,622,215,620,260,590,300,600,345,592,380,620,420,640,455,652,490,610,530,530,570,487,600,495,650,525,690,580,735,590,765,625,810,610,850,570,890,555,935,580,960,590,985,620,1030,638,1060,640,1100,665,1140,692,1170,688]), V11([0,692,50,695,100,680,160,655,210,652,240,642,290,638,330,610,365,596,430,612,460,635,500,650,530,615,590,590,640,538,670,545,720,512,760,527,800,570,830,605,885,642,920,605,965,560,1020,484,1060,510,1100,538,1128,530]))) });
})();
```
